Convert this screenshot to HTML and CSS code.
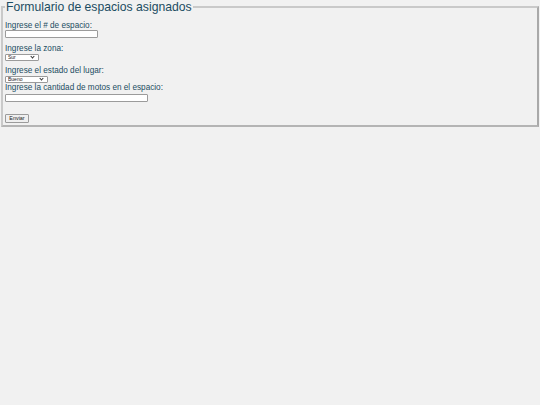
FILE: index.html
```html
<!DOCTYPE html>
<html lang="es">
<head>
<meta charset="utf-8">
<title>Formulario</title>
<link rel="stylesheet" href="styles.css">
</head>
<body>
<form class="form">
<fieldset class="box">
<legend class="title">Formulario de espacios asignados</legend>
<label class="lbl first" for="num">Ingrese el # de espacio:</label>
<input class="txt" id="num" type="text">
<label class="lbl gap" for="zona">Ingrese la zona:</label>
<span class="sel-wrap sel-zona"><select class="sel" id="zona"><option>Sur</option><option>Norte</option></select></span>
<label class="lbl gap2" for="estado">Ingrese el estado del lugar:</label>
<span class="sel-wrap sel-estado"><select class="sel" id="estado"><option>Bueno</option><option>Malo</option></select></span>
<label class="lbl" for="motos">Ingrese la cantidad de motos en el espacio:</label>
<input class="txt txt-wide" id="motos" type="text">
<button class="btn" type="submit">Enviar</button>
</fieldset>
</form>
</body>
</html>
```
FILE: styles.css
```css
html, body {
  margin: 0;
  padding: 0;
  background: #f1f1f1;
}
body {
  font-family: "Liberation Sans", Arial, sans-serif;
  color: #1c4d62;
  font-size: 8.2px;
}
.form {
  margin: 0;
}
.box {
  display: flex;
  flex-direction: column;
  align-items: flex-start;
  margin: 0 1px;
  padding: 0 2px 2px 2px;
  border-style: solid;
  border-width: 2px;
  border-color: #c9c9c9 #a9a9a9 #b4b4b4 #c9c9c9;
}
.title {
  font-size: 12.2px;
  line-height: 14px;
  padding: 0 1px;
}
.lbl {
  display: block;
  line-height: 9px;
}
.lbl.first {
  margin-top: 7px;
}
.lbl.gap {
  margin-top: 6px;
}
.lbl.gap2 {
  margin-top: 5px;
}
.txt {
  box-sizing: border-box;
  display: block;
  width: 93px;
  height: 8px;
  margin: 0;
  padding: 0 1px;
  border: 1px solid #9b9b9b;
  border-radius: 1px;
  background: #fff;
  font-size: 6px;
}
.txt-wide {
  width: 143px;
  margin-top: 2px;
}
.sel-wrap {
  position: relative;
  display: block;
  margin-top: 1px;
  height: 7px;
}
.sel-zona {
  width: 34px;
}
.sel-estado {
  width: 43px;
}
.sel-wrap::after {
  content: "";
  position: absolute;
  right: 5px;
  top: 1px;
  width: 2px;
  height: 2px;
  border-right: 1px solid #333;
  border-bottom: 1px solid #333;
  transform: rotate(45deg);
  pointer-events: none;
}
.sel {
  -webkit-appearance: none;
  appearance: none;
  box-sizing: border-box;
  display: block;
  width: 100%;
  height: 7px;
  margin: 0;
  padding: 0 0 0 2px;
  font-family: "Liberation Sans", Arial, sans-serif;
  font-size: 5px;
  line-height: 5px;
  border: 1px solid #9b9b9b;
  border-radius: 1px;
  background: #fff;
  color: #222;
}
.btn {
  box-sizing: border-box;
  display: block;
  height: 9px;
  width: 24px;
  padding: 0;
  margin: 12px 0 0 0;
  font-family: "Liberation Sans", Arial, sans-serif;
  font-size: 5.4px;
  line-height: 7px;
  color: #222;
  background: #efefef;
  border: 1px solid #9b9b9b;
  border-radius: 1px;
}
```
